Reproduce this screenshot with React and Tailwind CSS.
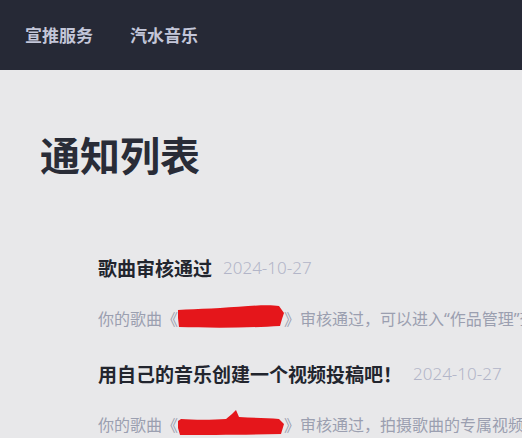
import React from "react";

const cjk = { fontFamily: '"Noto Sans CJK SC", "Noto Sans", sans-serif' };
const body = { fontFamily: '"Noto Sans", "Noto Sans CJK SC", sans-serif' };

function Blot({ spike = false }) {
   return (
      <svg
         width="106"
         height="26"
         viewBox="0 0 106 26"
         className="inline-block align-middle -mt-[8px]"
      >
         {spike ? (
            <path
               d="M0 11 L3 9 C15 10 35 10 48 9 L54 4 L58 0 L61 7 C75 8 90 8 101 9 L106 14 L103 24 C70 25 30 25 2 25 L0 18 Z"
               fill="#e5161b"
            />
         ) : (
            <path
               d="M0 6 C20 5 45 4 70 2 C85 1 95 1 101 2 L106 9 L104 15 L102 22 C70 24 30 24 1 23 L0 14 Z"
               fill="#e5161b"
            />
         )}
      </svg>
   );
}

function Notice({ title, date, before, after, spike }) {
   return (
      <li className="flex flex-col">
         <div className="flex items-center h-[28px] gap-[11px] whitespace-nowrap">
            <span className="shrink-0 text-[19px] font-bold text-[#22252e]" style={cjk}>
               {title}
            </span>
            <span className="shrink-0 text-[17px] font-light text-[#b2b5c8] font-['Noto_Sans',sans-serif]">
               {date}
            </span>
         </div>
         <p
            className="mt-[23px] h-[28px] leading-[28px] text-[16px] text-[#9b9fb0] whitespace-nowrap"
            style={body}
         >
            {before}
            <Blot spike={spike} />
            {after}
         </p>
      </li>
   );
}

export default function App() {
   return (
      <div className="min-h-[438px] w-[522px] overflow-hidden bg-[#e8e8ea]" style={cjk}>
         <header className="h-[70px] bg-[#262936] flex items-center px-[25px] gap-[37px]">
            <a className="text-[17px] font-bold text-[#c3c6d9]">宣推服务</a>
            <a className="text-[17px] font-bold text-[#c3c6d9]">汽水音乐</a>
         </header>

         <main className="px-[40px]">
            <h1 className="mt-[64px] text-[40px] leading-[40px] font-bold text-[#292c37]">
               通知列表
            </h1>

            <ul className="mt-[80px] pl-[58px] flex flex-col gap-[27px]">
               <Notice
                  title="歌曲审核通过"
                  date="2024-10-27"
                  before="你的歌曲《"
                  after="》审核通过，可以进入“作品管理”查看"
               />
               <Notice
                  title="用自己的音乐创建一个视频投稿吧！"
                  date="2024-10-27"
                  before="你的歌曲《"
                  after="》审核通过，拍摄歌曲的专属视频吧"
                  spike
               />
            </ul>
         </main>
      </div>
   );
}
